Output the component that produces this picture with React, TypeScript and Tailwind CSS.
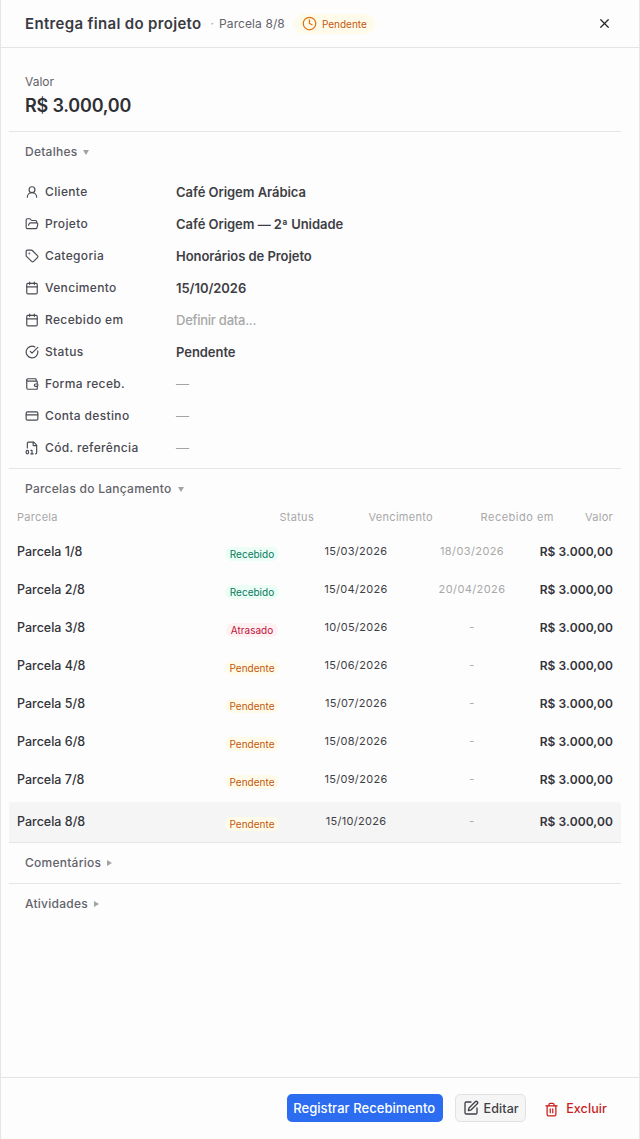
import { Calendar, CircleCheckBig, Clock, CreditCard, FileDigit, FolderOpen, SquarePen, Tag, Trash2, UserRound, Wallet, X } from "lucide-react"
import type { ReactNode } from "react"

const details = [
  { icon: <UserRound size={14} />, label: "Cliente", value: "Café Origem Arábica" },
  { icon: <FolderOpen size={14} />, label: "Projeto", value: "Café Origem — 2ª Unidade" },
  { icon: <Tag size={14} />, label: "Categoria", value: "Honorários de Projeto" },
  { icon: <Calendar size={14} />, label: "Vencimento", value: "15/10/2026" },
  { icon: <Calendar size={14} />, label: "Recebido em", value: "Definir data...", muted: true },
  { icon: <CircleCheckBig size={14} />, label: "Status", value: "Pendente" },
  { icon: <Wallet size={14} />, label: "Forma receb.", value: "—", dash: true },
  { icon: <CreditCard size={14} />, label: "Conta destino", value: "—", dash: true },
  { icon: <FileDigit size={14} />, label: "Cód. referência", value: "—", dash: true },
]

const parcelas = [
  { name: "Parcela 1/8", status: "Recebido", due: "15/03/2026", paid: "18/03/2026" },
  { name: "Parcela 2/8", status: "Recebido", due: "15/04/2026", paid: "20/04/2026" },
  { name: "Parcela 3/8", status: "Atrasado", due: "10/05/2026", paid: "-" },
  { name: "Parcela 4/8", status: "Pendente", due: "15/06/2026", paid: "-" },
  { name: "Parcela 5/8", status: "Pendente", due: "15/07/2026", paid: "-" },
  { name: "Parcela 6/8", status: "Pendente", due: "15/08/2026", paid: "-" },
  { name: "Parcela 7/8", status: "Pendente", due: "15/09/2026", paid: "-" },
  { name: "Parcela 8/8", status: "Pendente", due: "15/10/2026", paid: "-", current: true },
]

function StatusPill({ status }: { status: string }) {
  const color =
    status === "Recebido"
      ? "bg-[#ecfdf5] text-[#057a5f]"
      : status === "Atrasado"
        ? "bg-[#fff1f2] text-[#be123c]"
        : "bg-[#fffbeb] text-[#c2570c]"
  return <span className={`rounded-full px-[5px] text-[10px] leading-[14px] ${color}`}>{status}</span>
}

function SectionTitle({ open, children }: { open?: boolean; children: ReactNode }) {
  return (
    <div className="flex items-center gap-[6px] text-[12px] font-medium tracking-[0.25px] text-[#63636b]">
      {children}
      {open ? (
        <span className="h-0 w-0 border-x-[3.5px] border-t-[5px] border-x-transparent border-t-[#a3a3a3]" />
      ) : (
        <span className="h-0 w-0 border-y-[3.5px] border-l-[5px] border-y-transparent border-l-[#a3a3a3]" />
      )}
    </div>
  )
}

export default function App() {
  return (
    <div className="flex h-[1139px] flex-col border-x border-[#e5e5e5] bg-[#fdfdfd] font-['Inter',sans-serif] text-[#3f3f46]">
      {/* Header */}
      <div className="flex h-[48px] shrink-0 items-center border-b border-[#e5e5e5] pl-6 pr-[27px]">
        <h1 className="mt-[1px] text-[15px] font-semibold tracking-[0.33px] text-[#3a3a42]">Entrega final do projeto</h1>
        <span className="ml-[9px] text-[12px] text-[#a3a3a3]">·</span>
        <span className="ml-[5px] text-[12px] tracking-[0.1px] text-[#63636b]">Parcela 8/8</span>
        <span className="ml-[9px] flex h-[20px] items-center gap-[5px] rounded-full bg-[#fffbeb] px-2 text-[10px] text-[#c2570c]">
          <Clock size={15} className="text-[#e0720f]" />
          <span className="pt-[1px]">Pendente</span>
        </span>
        <X size={15} strokeWidth={2} className="ml-auto text-[#27272a]" />
      </div>

      {/* Valor */}
      <div className="ml-2 mr-[18px] h-[84px] shrink-0 border-b border-[#e5e5e5] px-4 pt-[26px]">
        <div className="text-[12px] leading-[16px] text-[#63636b]">Valor</div>
        <div className="mt-[4px] text-[18px] font-semibold leading-[24px] tracking-[-0.2px] text-[#2f2f36]">R$ 3.000,00</div>
      </div>

      {/* Detalhes */}
      <div className="ml-2 mr-[18px] h-[337px] shrink-0 border-b border-[#e5e5e5] px-4 pt-[11px]">
        <SectionTitle open>Detalhes</SectionTitle>
        <div className="mt-[16px] flex flex-col">
          {details.map((d) => (
            <div key={d.label} className="grid h-[32px] grid-cols-[151px_1fr] items-center">
              <div className="mb-[2px] flex items-center gap-[6px] whitespace-nowrap text-[12px] font-medium tracking-[0.35px] text-[#4a4a52]">
                <span className="flex w-[14px] text-[#4a4a52]">{d.icon}</span>
                {d.label}
              </div>
              <div
                className={`text-[13px] ${
                  d.muted
                    ? "font-medium tracking-[-0.25px] text-[#a8a8a8]"
                    : d.dash
                      ? "font-normal text-[#a3a3a3]"
                      : "font-semibold tracking-[-0.05px] text-[#3f3f46]"
                }`}
              >
                {d.value}
              </div>
            </div>
          ))}
        </div>
      </div>

      {/* Parcelas */}
      <div className="ml-2 mr-[18px] shrink-0 border-b border-[#e5e5e5] pt-[11px]">
        <div className="px-4">
          <SectionTitle open>Parcelas do Lançamento</SectionTitle>
        </div>
        <div className="mt-[11px] grid h-[16px] grid-cols-[262px_35px_119px_121px_59px] items-center px-2 text-right text-[11px] tracking-[0.3px] text-[#a8a8a8]">
          <span className="text-left">Parcela</span>
          <span>Status</span>
          <span>Vencimento</span>
          <span className="tracking-[0.5px]">Recebido em</span>
          <span>Valor</span>
        </div>
        <div className="mt-[9px] flex flex-col">
          {parcelas.map((p) => (
            <div
              key={p.name}
              className={`grid grid-cols-[205px_60px_148px_84px_99px] items-center rounded-t-[3px] px-2 ${
                p.current ? "mt-[2px] h-[40px] bg-[#f5f5f5] pt-[2px]" : "h-[38px]"
              }`}
            >
              <span className="mb-[2px] text-[12.5px] font-medium text-[#33333a]">{p.name}</span>
              <span className="mt-[1px] flex justify-center">
                <StatusPill status={p.status} />
              </span>
              <span className="mb-[3px] text-center text-[11px] tracking-[0.3px] text-[#3f3f46]">{p.due}</span>
              <span className="mb-[3px] text-center text-[11px] tracking-[0.4px] text-[#a8a8a8]">{p.paid}</span>
              <span className="mb-[3px] text-right text-[12px] font-semibold tracking-[0.1px] text-[#33333a]">R$ 3.000,00</span>
            </div>
          ))}
        </div>
      </div>

      {/* Comentarios / Atividades */}
      <div className="ml-2 mr-[18px] flex h-[41px] shrink-0 items-center border-b border-[#e5e5e5] px-4">
        <SectionTitle>Comentários</SectionTitle>
      </div>
      <div className="ml-2 mr-[18px] flex h-[41px] shrink-0 items-center px-4 pb-[2px]">
        <SectionTitle>Atividades</SectionTitle>
      </div>

      {/* Footer */}
      <div className="mt-auto flex h-[62px] shrink-0 items-start justify-end gap-3 border-t border-[#e5e5e5] pr-[32px] pt-4">
        <button className="h-[28px] w-[156px] rounded-[5px] bg-[#2b6cf0] pr-[2px] pt-[1px] text-[13px] font-medium tracking-[0.05px] text-white">
          Registrar Recebimento
        </button>
        <button className="flex h-[28px] w-[71px] items-center justify-center gap-[5px] rounded-[5px] border border-[#e2e2e2] bg-[#f5f5f5] pt-[2px] text-[12.5px] font-medium tracking-[0.1px] text-[#3f3f46]">
          <SquarePen size={16} className="-mt-[2px]" />
          Editar
        </button>
        <button className="ml-[6px] flex h-[28px] items-center gap-[7px] pt-[2px] text-[12.5px] font-medium tracking-[0.1px] text-[#c81e1e]">
          <Trash2 size={15} />
          Excluir
        </button>
      </div>
    </div>
  )
}
